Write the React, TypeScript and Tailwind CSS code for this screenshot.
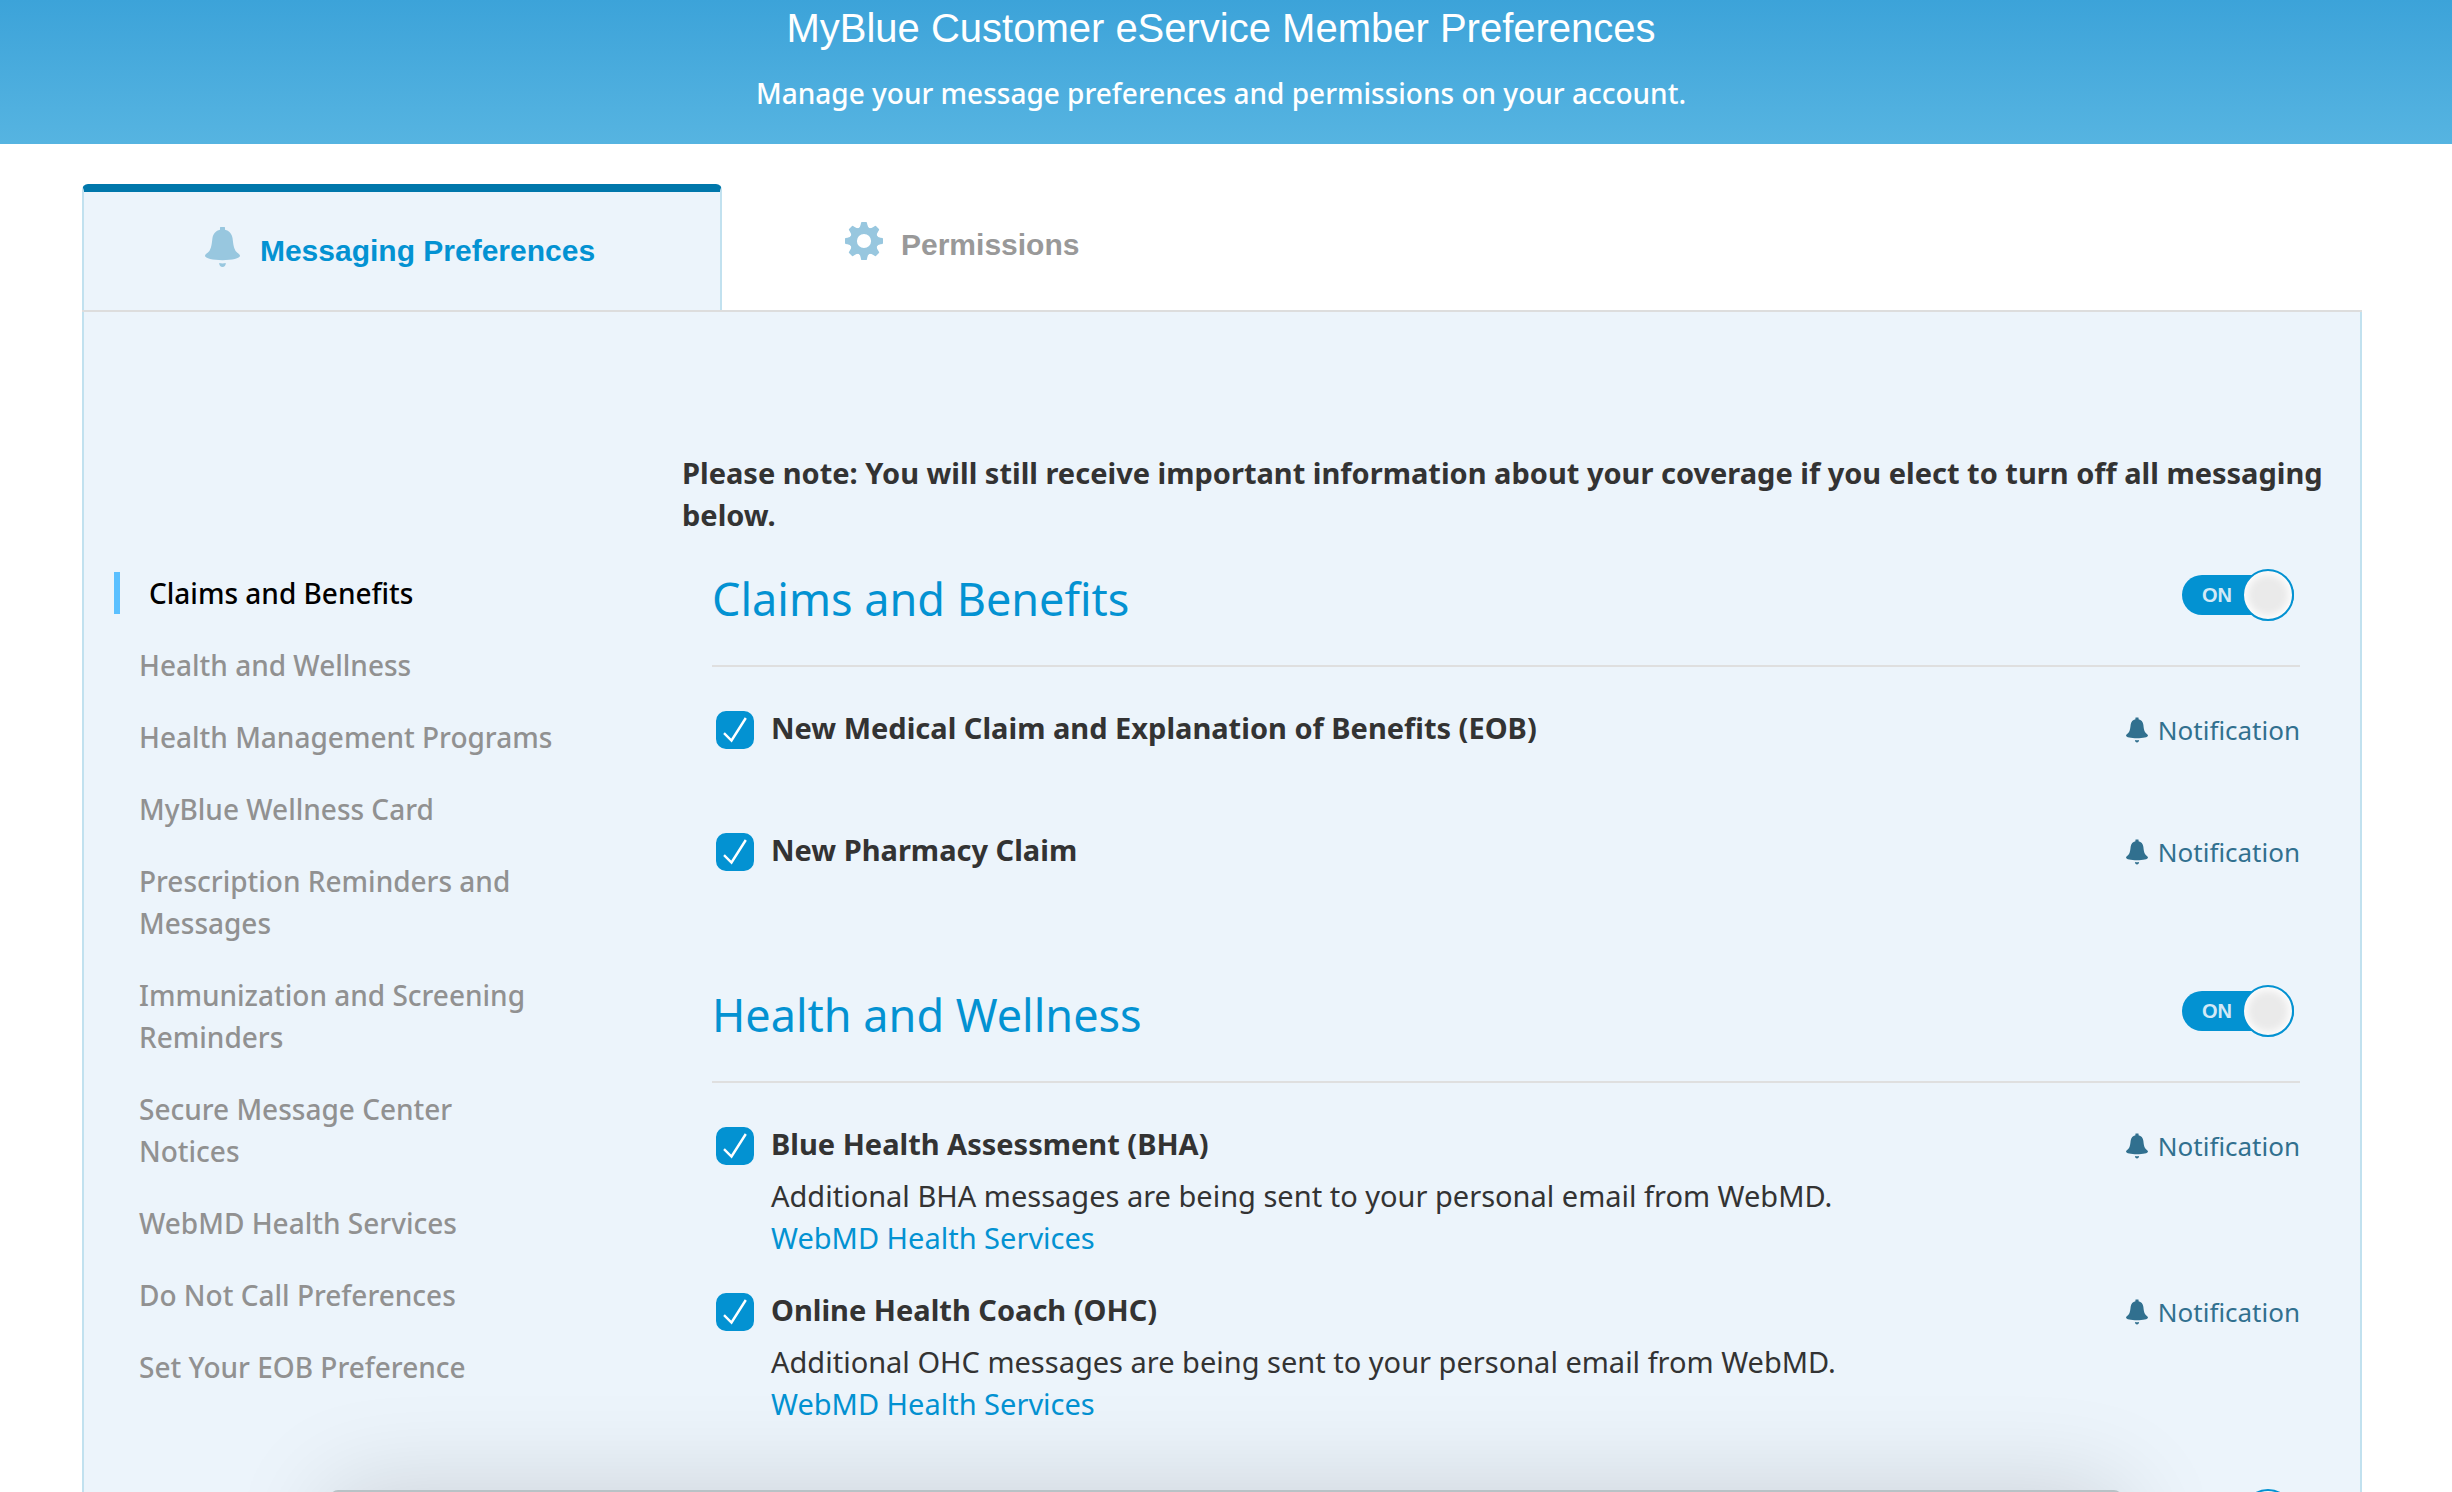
import { useState } from "react";

type Preference = {
  id: string;
  title: string;
  detail?: string;
  link?: string;
};

type Section = {
  id: string;
  title: string;
  items: Preference[];
};

const NAV_ITEMS = [
  "Claims and Benefits",
  "Health and Wellness",
  "Health Management Programs",
  "MyBlue Wellness Card",
  "Prescription Reminders and Messages",
  "Immunization and Screening Reminders",
  "Secure Message Center Notices",
  "WebMD Health Services",
  "Do Not Call Preferences",
  "Set Your EOB Preference",
];

const SECTIONS: Section[] = [
  {
    id: "claims",
    title: "Claims and Benefits",
    items: [
      { id: "eob", title: "New Medical Claim and Explanation of Benefits (EOB)" },
      { id: "pharmacy", title: "New Pharmacy Claim" },
    ],
  },
  {
    id: "wellness",
    title: "Health and Wellness",
    items: [
      {
        id: "bha",
        title: "Blue Health Assessment (BHA)",
        detail: "Additional BHA messages are being sent to your personal email from WebMD.",
        link: "WebMD Health Services",
      },
      {
        id: "ohc",
        title: "Online Health Coach (OHC)",
        detail: "Additional OHC messages are being sent to your personal email from WebMD.",
        link: "WebMD Health Services",
      },
    ],
  },
];

const TOOTH_ANGLES = [0, 45, 90, 135, 180, 225, 270, 315];

function BellIcon({ className }: { className: string }) {
  return (
    <svg viewBox="0 0 35 40" className={className} fill="currentColor" aria-hidden="true">
      <path d="M15 0.6Q15 0 15.6 0h3.8Q20 0 20 .6V2.8c4.2 1 7 4 7.6 8.7.6 5 .9 8.500 2.600 11.700 1.500 2.700 4.800 3.600 4.800 5.600C35 31.600 27 33.200 17.500 33.200S0 31.600 0 28.800c0-2 3.300-2.900 4.800-5.600C6.500 20 6.800 16.500 7.400 11.500 8 6.800 10.800 3.800 15 2.800z" />
      <path d="M14.200 36q3.300.8 6.600 0c0 2.400-1.400 4-3.300 4s-3.300-1.600-3.300-4z" />
    </svg>
  );
}

function GearIcon({ className }: { className: string }) {
  return (
    <svg viewBox="-19 -19 38 38" className={className} fill="currentColor" aria-hidden="true">
      <circle r="10.6" fill="none" stroke="currentColor" strokeWidth="7" />
      {TOOTH_ANGLES.map((angle) => (
        <path
          key={angle}
          d="M-5.500 -12.500 Q-3.700 -14 -3.300 -16.500 L-2.900 -18.400 Q-2.700 -19 -2.100 -19 H2.100 Q2.700 -19 2.900 -18.400 L3.300 -16.500 Q3.700 -14 5.500 -12.500z"
          transform={`rotate(${angle})`}
        />
      ))}
    </svg>
  );
}

function Toggle({ label, showState = true }: { label: string; showState?: boolean }) {
  const [on, setOn] = useState(true);
  return (
    <label className="relative mr-1.5 flex h-[52px] w-28 shrink-0 cursor-pointer items-center">
      <input
        type="checkbox"
        role="switch"
        aria-label={label}
        checked={on}
        onChange={() => setOn(!on)}
        className="peer absolute inset-0 size-full cursor-pointer appearance-none rounded-full"
      />
      <span className="pointer-events-none relative flex h-10 w-full items-center rounded-full bg-[#8f9ba3] px-5 font-['Liberation_Sans',sans-serif] text-[20px] leading-6 font-bold text-[#d3e9f6] peer-checked:bg-[#0392d2]">
        {on && showState ? "ON" : ""}
      </span>
      <span className="pointer-events-none absolute top-0 left-0 size-[52px] rounded-full border-2 border-[#8f9ba3] bg-[#eaeaea] shadow-[inset_0_0_8px_3px_#ffffff] peer-checked:right-0 peer-checked:left-auto peer-checked:border-[#0392d2]" />
    </label>
  );
}

function PreferenceRow({ item }: { item: Preference }) {
  const [checked, setChecked] = useState(true);
  return (
    <li className="flex min-h-[92px] items-start">
      <span className="relative mt-1 ml-1 size-[38px] shrink-0">
        <input
          id={item.id}
          type="checkbox"
          checked={checked}
          onChange={() => setChecked(!checked)}
          className="peer block size-full cursor-pointer appearance-none rounded-[10px] border-2 border-[#0392d2] bg-white checked:bg-[#0392d2]"
        />
        <svg
          viewBox="0 0 38 38"
          className="pointer-events-none absolute inset-0 size-full opacity-0 peer-checked:opacity-100"
          fill="none"
          stroke="#ffffff"
          strokeWidth="2.400"
          aria-hidden="true"
        >
          <path d="M8 22.200 15.500 29.500 29.800 7" />
        </svg>
      </span>
      <div className="ml-[17px] flex-1 leading-[42px]">
        <label htmlFor={item.id} className="block font-bold">
          {item.title}
        </label>
        {item.detail && <p className="mt-2.5">{item.detail}</p>}
        {item.link && (
          <a href="#webmd" className="block w-fit text-[#0392d2]">
            {item.link}
          </a>
        )}
      </div>
      <button
        type="button"
        className="mt-0.5 flex cursor-pointer items-center gap-2.5 text-[26px] leading-[42px] text-[#31708f]"
      >
        <BellIcon className="h-[26px] w-[22px]" />
        Notification
      </button>
    </li>
  );
}

function PreferenceSection({ section }: { section: Section }) {
  return (
    <section>
      <header className="flex items-start justify-between border-b-2 border-[#dfdfdf] pb-9">
        <h2 className="text-[45px] leading-[60px] text-[#0392d2]">{section.title}</h2>
        <Toggle label={section.title} />
      </header>
      <ul className="flex flex-col gap-[30px] pt-10">
        {section.items.map((item) => (
          <PreferenceRow key={item.id} item={item} />
        ))}
      </ul>
    </section>
  );
}

export default function App() {
  return (
    <div className="relative h-screen overflow-hidden bg-white font-['Noto_Sans',sans-serif] text-[29px] leading-[42px] text-[#333333]">
      <header className="bg-linear-to-b from-[#3ca3d9] to-[#56b4e1] pr-2.5 pb-[30px] text-center text-white">
        <h1 className="font-['Liberation_Sans',sans-serif] text-[40px] leading-14">
          MyBlue Customer eService Member Preferences
        </h1>
        <p className="mt-4 text-[28px] font-medium">
          Manage your message preferences and permissions on your account.
        </p>
      </header>

      <main className="pt-10 pr-[90px] pl-[82px]">
        <div
          role="tablist"
          className="flex border-b-2 border-[#dddddd] font-['Liberation_Sans',sans-serif] text-[30px] font-bold"
        >
          <button
            type="button"
            role="tab"
            aria-selected="true"
            className="flex h-[126px] w-[640px] cursor-pointer items-center justify-center gap-5 rounded-t-md border-x-2 border-t-8 border-x-[#c1e1ef] border-t-[#0077ab] bg-[#ecf4fb] pr-1 text-[#0392d2]"
          >
            <BellIcon className="mb-2 h-10 w-[35px] text-[#98c7df]" />
            Messaging Preferences
          </button>
          <button
            type="button"
            role="tab"
            aria-selected="false"
            className="flex h-[126px] cursor-pointer items-center justify-center gap-[18px] px-[123px] pb-1 text-[#999999]"
          >
            <GearIcon className="mb-2 size-[38px] text-[#98c7df]" />
            Permissions
          </button>
        </div>

        <div className="flex border-x-2 border-[#c1e1ef] bg-[#ecf4fb]">
          <nav className="w-1/4 pt-[260px] pr-[98px] pl-[30px] text-[28px] font-medium">
            <ul className="flex flex-col gap-[30px]">
              {NAV_ITEMS.map((label, index) => (
                <li key={label}>
                  {index === 0 ? (
                    <a
                      href="#section"
                      aria-current="true"
                      className="block border-l-6 border-[#5bc0ff] pl-[29px] text-black"
                    >
                      {label}
                    </a>
                  ) : (
                    <a href="#section" className="block pl-[25px] text-[#919191]">
                      {label}
                    </a>
                  )}
                </li>
              ))}
            </ul>
          </nav>

          <div className="flex-1 pt-[140px] pr-5 pb-20 pl-[29px]">
            <p className="font-bold">
              Please note: You will still receive important information about your coverage if you
              elect to turn off all messaging below.
            </p>
            <div className="flex flex-col gap-16 pt-[33px] pr-10 pl-[30px]">
              {SECTIONS.map((section) => (
                <PreferenceSection key={section.id} section={section} />
              ))}
              <div className="flex justify-end">
                <Toggle label="Health Management Programs" showState={false} />
              </div>
            </div>
          </div>
        </div>
      </main>

      <div className="pointer-events-none absolute top-[calc(100%-2px)] right-[330px] left-[330px] h-96 rounded-lg bg-[#b8c2c6] shadow-[0_0_100px_rgba(0,0,0,0.15)]" />
    </div>
  );
}
